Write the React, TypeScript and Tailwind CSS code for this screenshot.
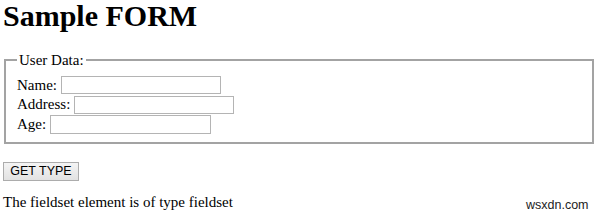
export default function App() {
  return (
    <div className="relative h-[215px] w-[600px] overflow-hidden bg-white px-[3px] font-['Liberation_Serif',serif] text-[15px] leading-[17px] text-black">
      <h1 className="text-[30px] font-bold leading-[32px]">Sample FORM</h1>

      <fieldset className="ml-[1px] mr-[3px] mt-[19.5px] border-2 border-[#a3a3a3] px-[11px] pb-[8px] pt-[7px]">
        <legend className="px-[2px] leading-[17px]">User Data:</legend>
        <div className="flex h-[19.5px] items-center">
          Name:
          <input type="text" className="ml-[4px] h-[18px] w-[160px] border border-[#b4b4b4] bg-white" />
        </div>
        <div className="flex h-[19.5px] items-center">
          Address:
          <input type="text" className="ml-[4px] h-[18px] w-[160px] border border-[#b4b4b4] bg-white" />
        </div>
        <div className="flex h-[19.5px] items-center">
          Age:
          <input type="text" className="ml-[4px] h-[19px] w-[161px] border border-[#b4b4b4] bg-white" />
        </div>
      </fieldset>

      <button
        type="button"
        className="mt-[18px] flex h-[19px] w-[76px] items-center justify-center border border-[#acacac] bg-gradient-to-b from-[#f4f4f4] to-[#e2e2e2] font-['Liberation_Sans',sans-serif] text-[12.5px] text-black"
      >
        GET TYPE
      </button>

      <p className="mt-[12.5px]">The fieldset element is of type fieldset</p>

      <span className="absolute left-[526px] top-[197px] font-['Liberation_Sans',sans-serif] text-[12.5px] text-[#222]">
        wsxdn.com
      </span>
    </div>
  );
}
